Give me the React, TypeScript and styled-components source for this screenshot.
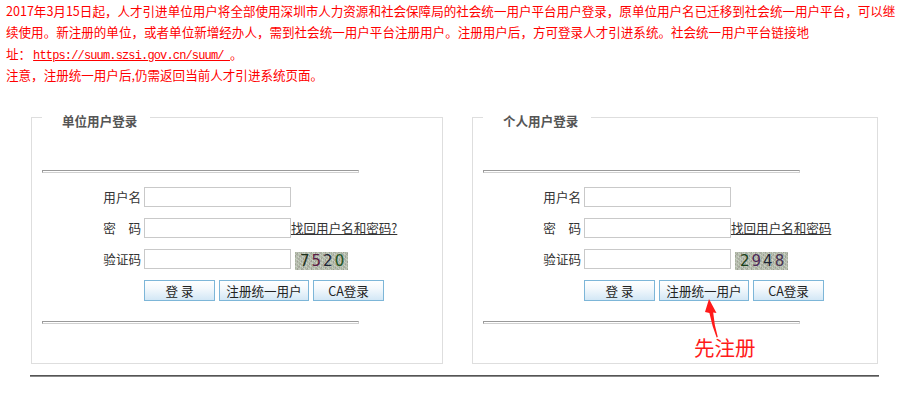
import React from "react";
import styled, { createGlobalStyle } from "styled-components";

const GlobalStyle = createGlobalStyle`
  html, body { margin: 0; padding: 0; background: #fff; }
  body {
    font-family: "Noto Sans CJK SC", "Noto Sans", sans-serif;
    font-size: 12.56px;
    color: #333;
  }
`;

const Page = styled.div`
  width: 898px;
  height: 397px;
  overflow: hidden;
`;

const Notice = styled.div`
  color: #ff0000;
  padding-left: 6px;
  line-height: 21.3px;
  height: 85px;
  white-space: nowrap;
`;

const NoticeLink = styled.a`
  color: #ff0000;
  text-decoration: underline;
  font-family: "Liberation Mono", monospace;
  font-size: 12px;
  line-height: 0;
  letter-spacing: -0.85px;
  margin-left: 2px;
`;

const Panels = styled.div`
  display: flex;
  gap: 29px;
  margin: 20px 0 0 31px;
`;

const Panel = styled.fieldset<{ $w: number }>`
  margin: 0;
  padding: 0 10px 39px 10px;
  width: ${(p) => p.$w}px;
  box-sizing: border-box;
  border: 1px solid #dedede;
  min-inline-size: auto;
`;

const Legend = styled.legend`
  padding: 8px 13px 0 20px;
  line-height: 16px;
  font-weight: bold;
  color: #555;
`;

const Rule = styled.div<{ $top: number }>`
  width: 315px;
  height: 1px;
  box-sizing: content-box;
  margin-top: ${(p) => p.$top}px;
  border: 1px solid;
  border-color: #9a9a9a #d0d0d0 #d0d0d0 #9a9a9a;
  background: #fff;
`;

const Form = styled.div<{ $label: number }>`
  display: grid;
  grid-template-columns: ${(p) => p.$label}px auto;
  column-gap: 3px;
  row-gap: 11px;
  margin-top: 14px;
`;

const Label = styled.label`
  text-align: right;
  line-height: 20px;
  color: #333;
  white-space: nowrap;
`;

const Field = styled.div`
  display: flex;
  align-items: center;
  height: 20px;
`;

const Input = styled.input`
  width: 147px;
  height: 20px;
  box-sizing: border-box;
  border: 1px solid #c9c9c9;
  padding: 0 2px;
  margin: 0;
  outline: none;
  font: inherit;
`;

const Forgot = styled.a`
  color: #333;
  text-decoration: underline;
  white-space: nowrap;
  line-height: 20px;
`;

const Captcha = styled.div`
  width: 53px;
  height: 18px;
  margin: 3px 0 0 4px;
  box-sizing: border-box;
  padding-left: 5px;
  display: flex;
  align-items: center;
  font-family: "DejaVu Sans", sans-serif;
  font-size: 15px;
  letter-spacing: 2px;
  line-height: 18px;
  background-color: #b9c0b1;
  background-image:
    repeating-linear-gradient(37deg, rgba(255,255,255,0.25) 0 1px, transparent 1px 3px),
    repeating-linear-gradient(-61deg, rgba(120,90,110,0.22) 0 1px, transparent 1px 4px),
    repeating-linear-gradient(90deg, rgba(90,120,80,0.18) 0 1px, transparent 1px 2px);
`;

const Digit = styled.span<{ $c: string }>`
  color: ${(p) => p.$c};
`;

const Buttons = styled.div`
  grid-column: 2;
  display: flex;
  gap: 4px;
`;

const Btn = styled.button<{ $w: number }>`
  width: ${(p) => p.$w}px;
  height: 21px;
  padding: 0;
  margin: 0;
  border: 1px solid #7db6d8;
  background: linear-gradient(#ffffff 0%, #f3f8fc 40%, #d3e7f6 100%);
  font: inherit;
  color: #222;
  line-height: 19px;
  white-space: nowrap;
`;

const BtnWrap = styled.div`
  position: relative;
  display: flex;
`;

const Arrow = styled.svg`
  position: absolute;
  left: 44px;
  top: 19px;
`;

const Note = styled.div`
  position: absolute;
  left: 35px;
  top: 57px;
  font-size: 20.5px;
  line-height: 21px;
  color: #ff1a1a;
  white-space: nowrap;
`;

const BottomLine = styled.div`
  width: 849px;
  margin: 11px 0 0 30px;
  border-top: 1px solid #555;
  border-bottom: 1px solid #8a8a8a;
`;

type Props = {
  w: number;
  label: number;
  title: string;
  forgot: string;
  code: { d: string; c: string }[];
  note?: boolean;
};

const LoginPanel: React.FC<Props> = ({ w, label, title, forgot, code, note }) => (
  <Panel $w={w}>
    <Legend>{title}</Legend>
    <Rule $top={41} />
    <Form $label={label}>
      <Label>用户名</Label>
      <Field>
        <Input type="text" />
      </Field>
      <Label>密　码</Label>
      <Field>
        <Input type="password" />
        <Forgot href="#">{forgot}</Forgot>
      </Field>
      <Label>验证码</Label>
      <Field>
        <Input type="text" />
        <Captcha>
          {code.map((k, i) => (
            <Digit key={i} $c={k.c}>
              {k.d}
            </Digit>
          ))}
        </Captcha>
      </Field>
      <Buttons>
        <Btn $w={71}>登 录</Btn>
        <BtnWrap>
          <Btn $w={90}>注册统一用户</Btn>
          {note && (
            <>
              <Arrow width="16" height="40" viewBox="0 0 16 40">
                <path
                  d="M6 0 L13.5 14 L10.2 13.4 Q11.2 26 14.8 38 L13.6 38.6 Q9 27 6.4 14 L2 13 Z"
                  fill="#ff1a1a"
                />
              </Arrow>
              <Note>先注册</Note>
            </>
          )}
        </BtnWrap>
        <Btn $w={71}>CA登录</Btn>
      </Buttons>
    </Form>
    <Rule $top={20} />
  </Panel>
);

export default function App() {
  return (
    <Page>
      <GlobalStyle />
      <Notice>
        2017年3月15日起，人才引进单位用户将全部使用深圳市人力资源和社会保障局的社会统一用户平台用户登录，原单位用户名已迁移到社会统一用户平台，可以继
        <br />
        续使用。新注册的单位，或者单位新增经办人，需到社会统一用户平台注册用户。注册用户后，方可登录人才引进系统。社会统一用户平台链接地
        <br />
        址：<NoticeLink href="#">https://suum.szsi.gov.cn/suum/ </NoticeLink>。
        <br />
        注意，注册统一用户后,仍需返回当前人才引进系统页面。
      </Notice>
      <Panels>
        <LoginPanel
          w={412}
          label={99}
          title="单位用户登录"
          forgot="找回用户名和密码?"
          code={[
            { d: "7", c: "#1c301c" },
            { d: "5", c: "#5a1c44" },
            { d: "2", c: "#1e2636" },
            { d: "0", c: "#245424" },
          ]}
        />
        <LoginPanel
          w={406}
          label={98}
          title="个人用户登录"
          forgot="找回用户名和密码"
          note
          code={[
            { d: "2", c: "#1a401a" },
            { d: "9", c: "#4c2a5a" },
            { d: "4", c: "#1e2636" },
            { d: "8", c: "#4a3452" },
          ]}
        />
      </Panels>
      <BottomLine />
    </Page>
  );
}
